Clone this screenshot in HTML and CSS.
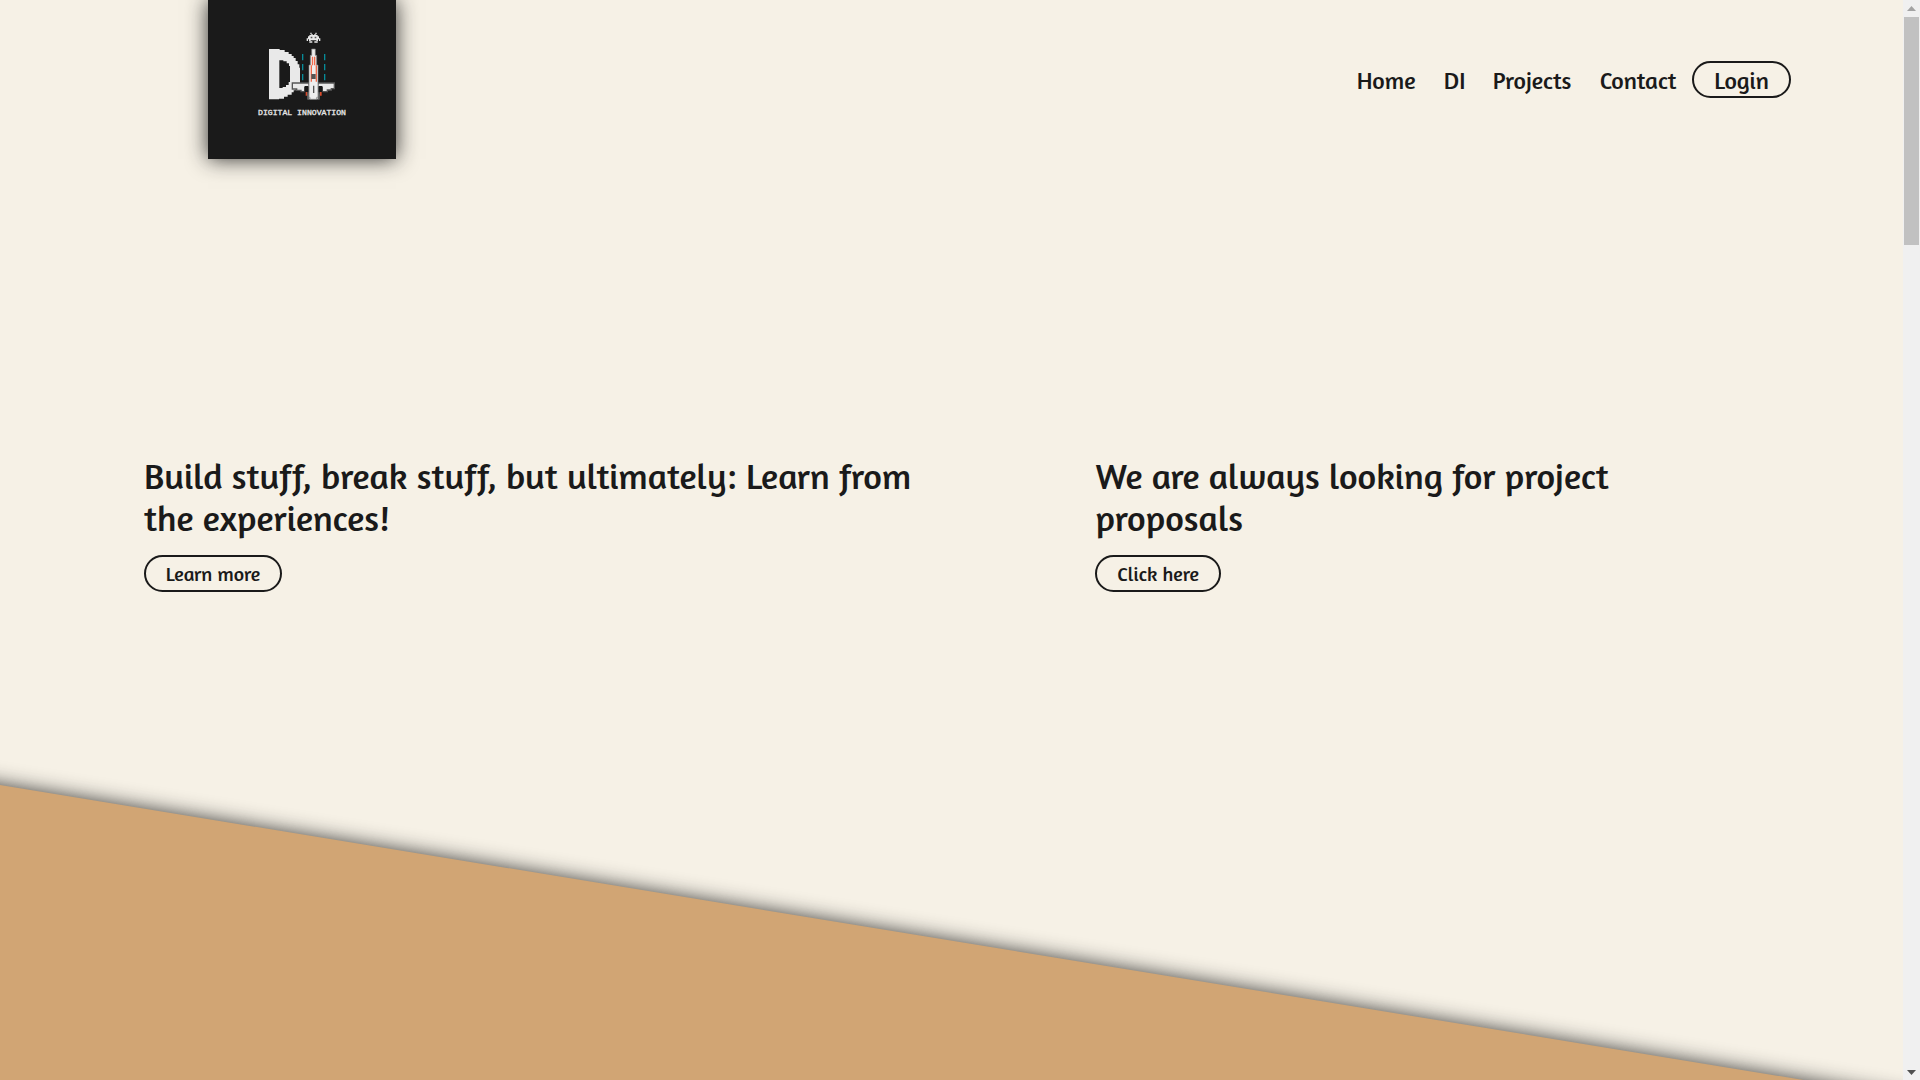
FILE: index.html
```html
<!DOCTYPE html>
<html lang="en">
<head>
<meta charset="utf-8">
<title>Digital Innovation</title>
<link rel="stylesheet" href="styles.css">
</head>
<body>
<div class="window">
  <div class="page">
    <header class="header">
      <a class="logo">
        <svg viewBox="54 0 564 476" width="188" height="158.67">
          <g fill="#e9e9e9">
            <path fill-rule="evenodd" d="M237 147H269V150H284V156H296V162H305V168H311V174H317V183H323V193H328V203H330V250H323V262H317V271H311V277H305V284H293V290H282V296H267V298H237ZM268 181V264H278V261H288V255H296V246H300V198H297V190H290V184H280V181Z"/>
            <path d="M361 98h4v5h-4zM376 98h4v5h-4zM364 102h4v4h-4zM373 102h4v4h-4zM358 105h25v4h4v6h4v8h-4v-5h-3v5h-5v-2h-17v2h-5v-5h-3v5h-4v-8h4v-6h4zM358 124h9v4h-9zM373 124h10v4h-10z"/>
          </g>
          <path d="M362 110h5v5h-5zM374 110h5v5h-5z" fill="#555"/>
          <path d="M338 162v19M338 192v19M338 222v19M338 248v7M404 162v19M404 192v19M404 222v19M404 248v7" stroke="#078b98" stroke-width="4"/>
          <path d="M307 249H357V255H384V249H433V266H424V270H412V275H397V262H387V298H354V262H344V275H333V271H320V267H307Z" fill="#e9e9e9" stroke="#555" stroke-width="4"/>
          <path d="M344 258h12v24h-12zM385 258h12v24h-12z" fill="#171717"/>
          <path d="M347 276h5v11h-5zM390 276h5v11h-5z" fill="#d94b2c"/>
          <path d="M352 277h5v20h-5zM384 277h5v20h-5z" fill="#666"/>
          <path d="M365 147H376V166H380V195H384V292H380V298H360V292H357V195H361V166H365Z" fill="#eee" stroke="#777" stroke-width="2"/>
          <path d="M367.5 170V196M374 170V196M364 196V245M379 196V245" stroke="#f06a4c" stroke-width="4"/>
          <path d="M364 222h13v15h-13zM369 257h4v22h-4z" fill="#555"/>
          <text class="logo-text" x="204" y="345" textLength="264" lengthAdjust="spacingAndGlyphs">DIGITAL INNOVATION</text>
        </svg>
      </a>
      <nav class="nav">
        <a class="link home">Home</a>
        <a class="link di">DI</a>
        <a class="link projects">Projects</a>
        <a class="link contact">Contact</a>
        <a class="pill login">Login</a>
      </nav>
    </header>
    <main class="intro">
      <section class="block">
        <h1 class="title">Build stuff, break stuff, but ultimately: Learn from<br>the experiences!</h1>
        <a class="pill learn">Learn more</a>
      </section>
      <section class="block">
        <h1 class="title">We are always looking for project<br>proposals</h1>
        <a class="pill click">Click here</a>
      </section>
    </main>
    <div class="slope"></div>
  </div>
  <div class="scrollbar">
    <svg class="arrow" viewBox="0 0 17 17"><path d="M4 11 8.5 6 13 11Z" fill="#a3a3a3"/></svg>
    <div class="thumb"></div>
    <svg class="arrow down" viewBox="0 0 17 17"><path d="M4 7H13L8.5 12Z" fill="#505050"/></svg>
  </div>
</div>
</body>
</html>
```
FILE: styles.css
```css
* { box-sizing: border-box; }
body {
  margin: 0;
  background: #f6f1e6;
  color: #1a1a1a;
  font-family: Amaranth, Lato, sans-serif;
  font-weight: 400;
}
.window {
  display: grid;
  grid-template-columns: 1fr 17px;
  height: 1080px;
  overflow: hidden;
}
.page {
  display: flex;
  flex-direction: column;
  height: 1080px;
  overflow: hidden;
}
.header {
  display: flex;
  flex: none;
  justify-content: space-between;
  height: 455px;
  padding: 0 112px 0 208px;
}
.logo {
  width: 188px;
  height: 158.67px;
  background: #1a1a1a;
  box-shadow: 0 0 20px rgba(26, 26, 26, 0.9);
}
.logo svg { display: block; }
.logo-text {
  font: 23px "Liberation Mono", monospace;
  fill: #e4e4e4;
  stroke: #e4e4e4;
  stroke-width: 1px;
}
.nav {
  display: flex;
  align-items: flex-start;
  height: 38px;
  margin-top: 61px;
  font-size: 24px;
  line-height: 39px;
  white-space: nowrap;
}
.home { width: 87px; }
.di { width: 49px; }
.projects { width: 107px; }
.contact { width: 92.5px; }
.pill {
  display: block;
  height: 37px;
  border: 2px solid #1a1a1a;
  border-radius: 19px;
  text-align: center;
  font-size: 20px;
  line-height: 33px;
}
.login { width: 98.75px; font-size: 24px; line-height: 35px; }
.intro {
  display: grid;
  grid-template-columns: 951.4px 1fr;
  flex: none;
  height: 330px;
  padding-left: 144px;
}
.title {
  margin: 0 0 17px;
  font-size: 36px;
  font-weight: 400;
  line-height: 41.5px;
  white-space: nowrap;
}
.learn { width: 138px; }
.click { width: 125.5px; }
.slope {
  flex: none;
  height: 700px;
  margin: 0 -200px;
  background: #d1a574;
  box-shadow: 0 0 20px rgba(26, 26, 26, 0.85);
  transform: skewY(9.29deg);
  transform-origin: 200px 0;
}
.scrollbar {
  display: flex;
  flex-direction: column;
  background: #f0f0f0;
}
.arrow { display: block; flex: none; width: 17px; height: 17px; }
.thumb { width: 15px; height: 228px; margin-left: 1px; background: #c1c1c1; }
.down { margin-top: auto; }
```
